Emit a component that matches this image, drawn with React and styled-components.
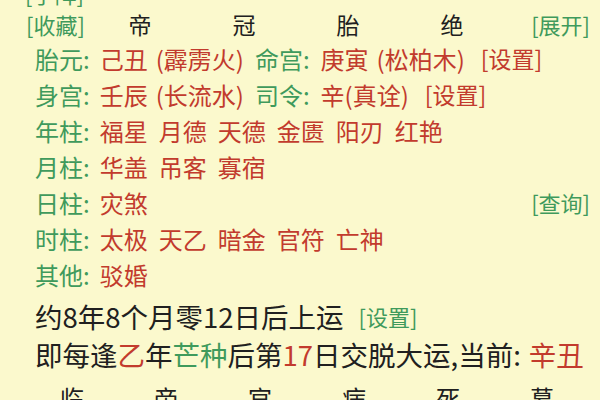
import styled, { createGlobalStyle } from 'styled-components';

const GlobalStyle = createGlobalStyle`
  html, body {
    margin: 0;
    padding: 0;
    background: #fbf9cd;
    overflow: hidden;
  }
  body {
    font-family: "Noto Sans CJK SC", "Noto Sans", sans-serif;
  }
`;

const green = '#3f9a5c';
const red = '#c23b2d';
const ink = '#202020';

const info = [
  {
    label: '胎元:',
    items: [
      { t: '己丑' },
      { t: '(霹雳火)', tight: true },
      { t: '命宫:', c: green },
      { t: '庚寅' },
      { t: '(松柏木)', tight: true },
      { t: '[设置]', small: true },
    ],
  },
  {
    label: '身宫:',
    items: [
      { t: '壬辰' },
      { t: '(长流水)', tight: true },
      { t: '司令:', c: green },
      { t: '辛(真诠)' },
      { t: '[设置]', small: true },
    ],
  },
  { label: '年柱:', items: ['福星', '月德', '天德', '金匮', '阳刃', '红艳'].map((t) => ({ t })) },
  { label: '月柱:', items: ['华盖', '吊客', '寡宿'].map((t) => ({ t })) },
  { label: '日柱:', items: [{ t: '灾煞' }], action: '[查询]' },
  { label: '时柱:', items: ['太极', '天乙', '暗金', '官符', '亡神'].map((t) => ({ t })) },
  { label: '其他:', items: [{ t: '驳婚' }] },
];

const Page = styled.div`
  width: 600px;
  height: 400px;
  overflow: hidden;
`;

// the list is scrolled a little, so the first row is half hidden
const Scroll = styled.div`
  margin-top: -19px;
`;

const Link = styled.span`
  color: ${green};
  font-size: 22px;
`;

const TopRow = styled.div`
  height: 24px;
  line-height: 24px;
  padding-left: 25px;
`;

const Header = styled.div`
  display: grid;
  grid-template-columns: 62px repeat(4, 104px) 1fr auto;
  align-items: center;
  height: 30px;
  margin-top: 2px;
  padding: 0 10px 0 26px;
`;

const Stage = styled.span`
  text-align: center;
  font-size: 23px;
  color: ${ink};
`;

const InfoList = styled.div`
  margin-top: 3px;
  padding: 0 10px 0 35px;
`;

const Row = styled.div`
  display: flex;
  align-items: center;
  gap: 11px;
  height: 36px;
  font-size: 24px;
`;

const Label = styled.span`
  color: ${green};
  margin-right: -1px;
`;

const Value = styled.span`
  color: ${(p) => p.$color || red};
  font-size: ${(p) => (p.$small ? '23px' : '24px')};
  margin-left: ${(p) => (p.$small ? '5px' : p.$tight ? '-3px' : '0')};
`;

const Action = styled(Link)`
  margin-left: auto;
`;

const Line = styled.div`
  display: flex;
  align-items: center;
  height: 38px;
  padding-left: 35px;
  font-size: 27.5px;
  color: ${ink};
  white-space: nowrap;
`;

const FirstLine = styled(Line)`
  margin-top: 5px;
  gap: 15px;
`;

const Red = styled.span`
  color: ${red};
`;

const Green = styled.span`
  color: ${green};
`;

const Current = styled(Red)`
  margin-left: 8px;
`;

const StageRow = styled.div`
  display: grid;
  grid-template-columns: repeat(6, 94px);
  height: 40px;
  line-height: 40px;
  margin-top: 5px;
  padding-left: 25px;
  font-size: 24px;
  color: ${ink};
`;

const BottomStage = styled.span`
  text-align: center;
`;

export default function App() {
  return (
    <Page>
      <GlobalStyle />
      <Scroll>
        <TopRow>
          <Link>[手阵]</Link>
        </TopRow>
        <Header>
          <Link>[收藏]</Link>
          {['帝', '冠', '胎', '绝'].map((s) => (
            <Stage key={s}>{s}</Stage>
          ))}
          <span />
          <Link>[展开]</Link>
        </Header>
        <InfoList>
          {info.map((row) => (
            <Row key={row.label}>
              <Label>{row.label}</Label>
              {row.items.map((it, i) => (
                <Value key={i} $color={it.c} $small={it.small} $tight={it.tight}>
                  {it.t}
                </Value>
              ))}
              {row.action && <Action>{row.action}</Action>}
            </Row>
          ))}
        </InfoList>
        <FirstLine>
          <span>约8年8个月零12日后上运</span>
          <Link>[设置]</Link>
        </FirstLine>
        <Line>
          即每逢<Red>乙</Red>年<Green>芒种</Green>后第<Red>17</Red>日交脱大运,当前:
          <Current>辛丑</Current>
        </Line>
        <StageRow>
          {['临', '帝', '官', '病', '死', '墓'].map((s) => (
            <BottomStage key={s}>{s}</BottomStage>
          ))}
        </StageRow>
      </Scroll>
    </Page>
  );
}
